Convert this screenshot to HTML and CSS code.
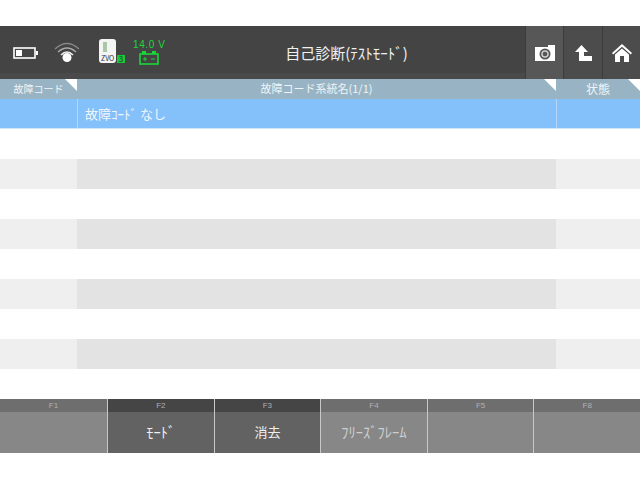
FILE: index.html
```html
<!DOCTYPE html>
<html lang="ja">
<head>
  <meta charset="UTF-8">
  <title>自己診断</title>
  <link rel="stylesheet" href="styles.css">
</head>
<body>

<header class="topbar">
  <div class="status">
    <svg class="icon-battery" width="26" height="12" viewBox="0 0 26 12">
      <rect x="1" y="1" width="21" height="10" fill="none" stroke="#fff" stroke-width="1.6"/>
      <rect x="3" y="3" width="6" height="6" fill="#fff"/>
      <rect x="23" y="4" width="2" height="4" fill="#fff"/>
    </svg>
    <svg class="icon-wifi" width="26" height="22" viewBox="0 0 26 22">
      <path d="M1 8 Q13 -3 25 8" fill="none" stroke="#888" stroke-width="1.2"/>
      <path d="M4 11 Q13 3 22 11" fill="none" stroke="#aaa" stroke-width="1.3"/>
      <path d="M7 14 Q13 8 19 14" fill="none" stroke="#eee" stroke-width="1.6"/>
      <circle cx="13" cy="16.5" r="4.5" fill="#fff"/>
    </svg>
    <div class="vci">
      <svg width="26" height="27" viewBox="0 0 26 27">
        <rect x="0" y="0" width="17" height="24" rx="3" fill="#f4f4f4"/>
        <rect x="4" y="3" width="4" height="10" fill="#a8c8a8"/>
        <rect x="18" y="16" width="8" height="8" fill="#18c838"/>
      </svg>
      <span class="vci-name">ZVO</span>
      <span class="vci-num">3</span>
    </div>
    <div class="volt">
      <span class="volt-text">14.0 V</span>
      <svg width="22" height="15" viewBox="0 0 22 15">
        <rect x="2" y="4" width="18" height="10" fill="none" stroke="#18d838" stroke-width="1.6"/>
        <rect x="4" y="1" width="4" height="3" fill="#18d838"/>
        <rect x="14" y="1" width="4" height="3" fill="#18d838"/>
        <path d="M5 9H9M7 7V11M13 9H17" stroke="#18d838" stroke-width="1"/>
      </svg>
    </div>
  </div>
  <h1 class="title">自己診断(ﾃｽﾄﾓｰﾄﾞ)</h1>
  <div class="tools">
    <button class="tool tool-on">
      <svg width="20" height="16" viewBox="0 0 20 16">
        <path d="M0 2H13V0H20V16H0Z" fill="#fff"/>
        <circle cx="10" cy="9" r="5.5" fill="#555"/>
        <circle cx="10" cy="9" r="3.8" fill="#ccc"/>
        <circle cx="10" cy="9" r="2.3" fill="#555"/>
      </svg>
    </button>
    <button class="tool">
      <svg width="17" height="16" viewBox="0 0 17 16">
        <path d="M6.5 0L13 7H9V11H17V16H4V7H0Z" fill="#fff"/>
      </svg>
    </button>
    <button class="tool">
      <svg width="20" height="18" viewBox="0 0 20 18">
        <path d="M10 0L20 9L18.8 10.4L10 2.8L1.2 10.4L0 9Z" fill="#fff"/>
        <path d="M10 4.5L17 10.5V18H12V12H8V18H3V10.5Z" fill="#fff"/>
      </svg>
    </button>
  </div>
</header>

<main class="table">
  <div class="row head">
    <div class="cell code corner">故障コード</div>
    <div class="cell name corner">故障コード系統名(1/1)</div>
    <div class="cell state corner">状態</div>
  </div>
  <div class="row selected">
    <div class="cell code"></div>
    <div class="cell name">故障ｺｰﾄﾞ なし</div>
    <div class="cell state"></div>
  </div>
  <div class="row"><div class="cell code"></div><div class="cell name"></div><div class="cell state"></div></div>
  <div class="row alt"><div class="cell code"></div><div class="cell name"></div><div class="cell state"></div></div>
  <div class="row"><div class="cell code"></div><div class="cell name"></div><div class="cell state"></div></div>
  <div class="row alt"><div class="cell code"></div><div class="cell name"></div><div class="cell state"></div></div>
  <div class="row"><div class="cell code"></div><div class="cell name"></div><div class="cell state"></div></div>
  <div class="row alt"><div class="cell code"></div><div class="cell name"></div><div class="cell state"></div></div>
  <div class="row"><div class="cell code"></div><div class="cell name"></div><div class="cell state"></div></div>
  <div class="row alt"><div class="cell code"></div><div class="cell name"></div><div class="cell state"></div></div>
  <div class="row"><div class="cell code"></div><div class="cell name"></div><div class="cell state"></div></div>
</main>

<footer class="fkeys">
  <div class="fkey"><div class="fkey-label">F1</div><div class="fkey-text"></div></div>
  <div class="fkey active"><div class="fkey-label">F2</div><div class="fkey-text">ﾓｰﾄﾞ</div></div>
  <div class="fkey active"><div class="fkey-label">F3</div><div class="fkey-text big">消去</div></div>
  <div class="fkey"><div class="fkey-label">F4</div><div class="fkey-text dim">ﾌﾘｰｽﾞﾌﾚｰﾑ</div></div>
  <div class="fkey"><div class="fkey-label">F5</div><div class="fkey-text"></div></div>
  <div class="fkey"><div class="fkey-label">F8</div><div class="fkey-text"></div></div>
</footer>

</body>
</html>
```

FILE: styles.css
```css
* {
  margin: 0;
  padding: 0;
  box-sizing: border-box;
  font-family: "Noto Sans CJK JP", "Noto Sans", sans-serif;
}

body {
  background: #fff;
  width: 640px;
  height: 480px;
  padding-top: 26px;
  overflow: hidden;
}

/* Top bar */
.topbar {
  display: flex;
  align-items: stretch;
  height: 53px;
  background: linear-gradient(#444 47px, #4a4a4a 47px);
}

.status {
  width: 168px;
  display: flex;
  align-items: center;
  padding-left: 13px;
}

.icon-wifi {
  margin-left: 15px;
  margin-top: -1px;
}

.vci {
  position: relative;
  width: 26px;
  height: 27px;
  margin-left: 19px;
  margin-top: -1px;
}

.vci-name {
  position: absolute;
  left: 2px;
  bottom: 4px;
  font-size: 7px;
  line-height: 8px;
  color: #333;
}

.vci-num {
  position: absolute;
  left: 18px;
  bottom: 3px;
  width: 8px;
  font-size: 8px;
  line-height: 8px;
  color: #333;
  text-align: center;
}

.volt {
  display: flex;
  flex-direction: column;
  align-items: center;
  margin-left: 8px;
  margin-top: -2px;
}

.volt-text {
  font-family: "Liberation Sans", sans-serif;
  font-size: 10px;
  line-height: 11px;
  color: #18d838;
  letter-spacing: 0.6px;
}

.title {
  flex: 1;
  padding-top: 16px;
  font-size: 15px;
  line-height: 21px;
  font-weight: normal;
  color: #f0f0f0;
  text-align: center;
}

.tools {
  display: flex;
}

.tool {
  width: 38px;
  display: flex;
  align-items: center;
  justify-content: center;
  background: #4c4c4c;
  border: 0;
  border-left: 1px solid #3c3c3c;
}

.tool:nth-child(2) {
  width: 39px;
}

.tool-on {
  background: #575757;
}

/* Table */
.row {
  display: flex;
  height: 30px;
}

.cell {
  font-size: 11px;
}

.code {
  width: 77px;
}

.name {
  width: 479px;
}

.state {
  width: 84px;
}

.head {
  height: 20px;
  background: #98b4c4;
  color: #eef4f8;
  text-align: center;
  line-height: 19px;
}

.head .cell {
  position: relative;
}

.head .code {
  font-size: 10px;
}

.head .state {
  font-size: 12px;
}

.corner::after {
  content: "";
  position: absolute;
  top: 0;
  right: 0;
  border-style: solid;
  border-width: 0 12px 12px 0;
  border-color: transparent #fff transparent transparent;
}

.selected {
  background: #84c0fa;
  border-bottom: 1px solid #cfe6fb;
}

.selected .name {
  padding: 5px 0 0 7px;
  font-size: 13px;
  line-height: 19px;
  color: #eef6fd;
  border-left: 1px solid #b4d8fb;
}

.selected .state {
  border-left: 1px solid #b4d8fb;
}

.alt .code,
.alt .state {
  background: #efefef;
}

.alt .name {
  background: #e3e3e3;
}

/* Function keys */
.fkeys {
  display: flex;
  height: 54px;
}

.fkey {
  flex: 1;
  background: #878787;
  border-left: 1px solid #c8c8c8;
  text-align: center;
}

.fkey:first-child {
  flex: none;
  width: 107px;
  border-left: 0;
}

.fkey-label {
  height: 13px;
  background: #6e6e6e;
  font-family: "Liberation Sans", sans-serif;
  font-size: 8px;
  line-height: 14px;
  color: #b0b0b8;
}

.fkey-text {
  padding-top: 10px;
  font-size: 14.5px;
  line-height: 20px;
  color: #f0f0f0;
}

.fkey-text.big {
  font-size: 13px;
}

.fkey-text.dim {
  color: #cfcfcf;
}

.active {
  background: #626262;
}

.active .fkey-label {
  background: #454545;
}
```
